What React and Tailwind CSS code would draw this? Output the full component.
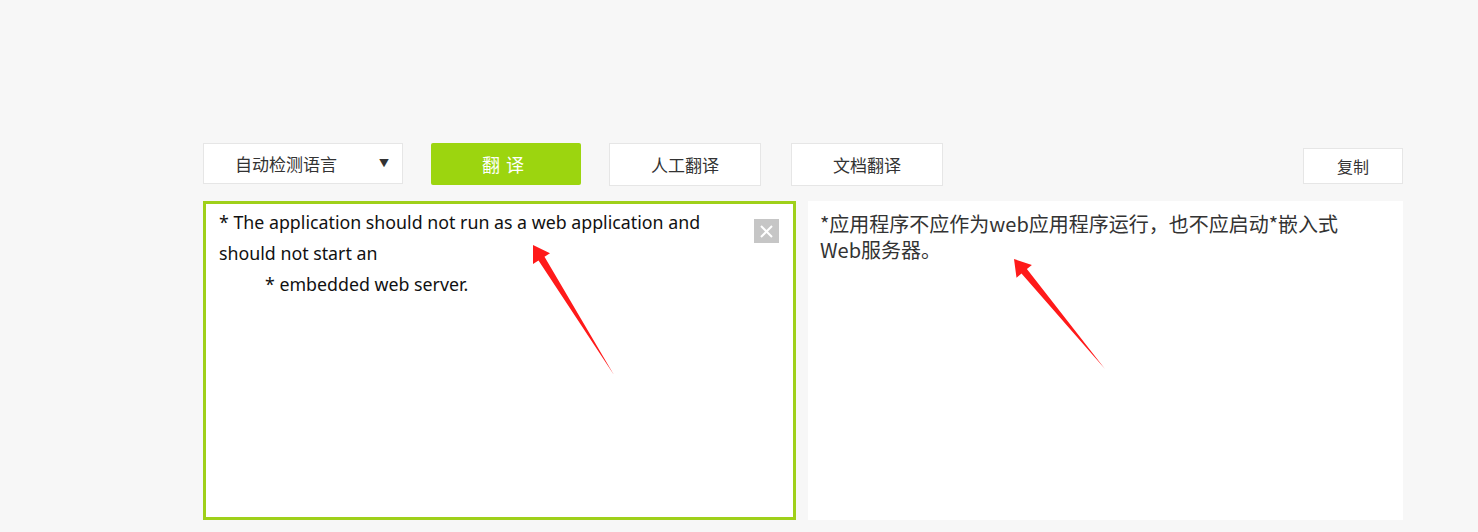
import React, { useState } from 'react';

const FONT = "font-['Segoe_UI','Noto_Sans','Noto_Sans_CJK_SC',sans-serif]";

export default function App() {
  const [source, setSource] = useState('');

  return (
    <div className={`relative min-h-screen h-[532px] bg-[#f7f7f7] overflow-hidden ${FONT}`}>
      <div className="ml-[203px] w-[1200px] pt-[143px] flex flex-col">
        {/* Toolbar */}
        <div className="flex items-start">
          <button className="w-[200px] h-[41px] bg-white border border-[#e6e6e6] flex items-center pl-[31px] pr-[13px] text-[17px] text-[#333]">
            <span className="font-['Noto_Sans_CJK_SC',sans-serif]">自动检测语言</span>
            <span className="ml-auto text-[10px] text-[#333]">▼</span>
          </button>
          <button className="ml-[28px] w-[150px] h-[42px] rounded-[2px] bg-[#9cd50f] text-white text-[18px] tracking-[6px] font-['Noto_Sans_CJK_SC',sans-serif] flex items-center justify-center">
            翻译
          </button>
          <button className="ml-[28px] w-[152px] h-[43px] bg-white border border-[#e6e6e6] text-[17px] text-[#333] font-['Noto_Sans_CJK_SC',sans-serif]">
            人工翻译
          </button>
          <button className="ml-[30px] w-[152px] h-[43px] bg-white border border-[#e6e6e6] text-[17px] text-[#333] font-['Noto_Sans_CJK_SC',sans-serif]">
            文档翻译
          </button>
          <button className="ml-auto mt-[5px] w-[100px] h-[36px] bg-white border border-[#e6e6e6] text-[16px] text-[#333] font-['Noto_Sans_CJK_SC',sans-serif]">
            复制
          </button>
        </div>

        {/* Panels */}
        <div className="mt-[15px] flex gap-[12px] h-[319px]">
          <div className="relative w-[593px] border-[3px] border-[#9fd01a] bg-white pl-[13px] pr-[60px] pt-[3px] text-[17.8px] leading-[31px] text-[#111]">
            <p>* The application should not run as a web application and should not start an</p>
            <p className="pl-[46px]">* embedded web server.</p>
            <button
              onClick={() => setSource('')}
              className="absolute top-[15px] right-[14px] w-[25px] h-[24px] bg-[#c6c6c6] flex items-center justify-center"
            >
              <svg width="13" height="13" viewBox="0 0 13 13">
                <path d="M1 1L12 12M12 1L1 12" stroke="#fff" strokeWidth="2" />
              </svg>
            </button>
          </div>
          <div className="flex-1 bg-white pl-[12px] pt-[10px] text-[20px] leading-[26px] text-[#333] font-['Noto_Sans_CJK_SC',sans-serif]">
            <p className="w-[530px]">*应用程序不应作为web应用程序运行，也不应启动*嵌入式Web服务器。</p>
          </div>
        </div>
      </div>

      {/* Annotation arrows */}
      <svg className="absolute inset-0 pointer-events-none" width="1478" height="532">
        <polygon
          points="533,245 550,253.3 544.5,256.7 614,375 538.5,260.5 533,263.9"
          fill="#ff1a1a"
        />
        <polygon
          points="1014,259 1031.9,264.9 1026.9,269.1 1105,369 1021.5,273.5 1016.5,277.7"
          fill="#ff1a1a"
        />
      </svg>
    </div>
  );
}
